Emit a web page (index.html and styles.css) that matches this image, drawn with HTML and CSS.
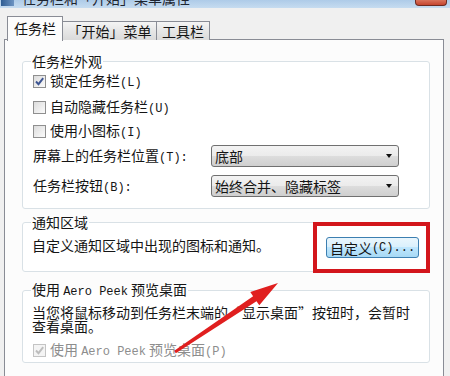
FILE: index.html
```html
<!DOCTYPE html>
<html lang="zh-CN">
<head>
<meta charset="utf-8">
<title>任务栏和「开始」菜单属性</title>
<link rel="stylesheet" href="styles.css">
</head>
<body>
<div class="titlebar">
  <div class="ticon"></div>
  <div class="ttext">任务栏和「开始」菜单属性</div>
  <div class="close"></div>
</div>
<div class="tabs">
  <div class="tab sel">任务栏</div>
  <div class="tab">「开始」菜单</div>
  <div class="tab">工具栏</div>
</div>
<div class="panel">
  <fieldset class="grp g1">
    <legend>任务栏外观</legend>
    <div class="row r1"><span class="cb on"><svg viewBox="0 0 11 11" width="11" height="11"><path d="M2 5.5 L4.5 8.2 L9.2 2.2" fill="none" stroke="#3d5592" stroke-width="1.9"/></svg></span><span class="lbl">锁定任务栏<span class="m">(L)</span></span></div>
    <div class="row r2"><span class="cb"></span><span class="lbl">自动隐藏任务栏<span class="m">(U)</span></span></div>
    <div class="row r3"><span class="cb"></span><span class="lbl">使用小图标<span class="m">(I)</span></span></div>
    <div class="row r4"><span class="flabel">屏幕上的任务栏位置<span class="m">(T):</span></span><div class="combo"><span>底部</span><i class="arr"></i></div></div>
    <div class="row r5"><span class="flabel">任务栏按钮<span class="m">(B):</span></span><div class="combo"><span>始终合并、隐藏标签</span><i class="arr"></i></div></div>
  </fieldset>
  <fieldset class="grp g2">
    <legend>通知区域</legend>
    <div class="row nrow"><span class="ntext">自定义通知区域中出现的图标和通知。</span><button class="btn">自定义<span class="m">(C)...</span></button></div>
  </fieldset>
  <fieldset class="grp g3">
    <legend>使用 <span class="m">Aero Peek</span> 预览桌面</legend>
    <div class="para">当您将鼠标移动到任务栏末端的“显示桌面”按钮时，会暂时<br>查看桌面。</div>
    <div class="row r6"><span class="cb dis"><svg viewBox="0 0 11 11" width="11" height="11"><path d="M2 5.5 L4.5 8.2 L9.2 2.2" fill="none" stroke="#bdbdbd" stroke-width="1.9"/></svg></span><span class="lbl gray">使用 <span class="m">Aero Peek</span> 预览桌面<span class="m">(P)</span></span></div>
  </fieldset>
</div>
<div class="redbox"></div>
<svg class="arrow" width="450" height="376" viewBox="0 0 450 376">
  <polygon points="175.8,353.2 256.5,301.2 259.3,305.3 278,283 250.3,292.1 253.1,296.2 174.2,350.8" fill="#e01f1f"/>
</svg>
</body>
</html>
```
FILE: styles.css
```css
html, body {
  margin: 0;
  padding: 0;
}
body {
  width: 450px;
  height: 376px;
  overflow: hidden;
  background: #f0f0f0;
  font-family: "Noto Sans CJK SC", sans-serif;
  font-size: 14px;
  color: #151515;
  position: relative;
}
.m {
  font-family: "Liberation Mono", "Noto Sans CJK SC", monospace;
  font-size: 12px;
}
.titlebar {
  height: 8px;
  display: flex;
  align-items: flex-start;
  overflow: hidden;
  background: linear-gradient(#aecbe8, #c6dcf0);
}
.ticon {
  width: 13px;
  height: 6px;
  background: linear-gradient(90deg, #2f5d93, #6d94c2);
  margin-left: 1px;
}
.ttext {
  margin-left: 8px;
  margin-top: -9px;
  line-height: 14px;
  color: #1e2530;
  white-space: nowrap;
}
.close {
  margin-left: auto;
  margin-right: 3px;
  width: 30px;
  height: 5px;
  background: linear-gradient(#d9735c, #c5452f);
  border: 1px solid #6d2b22;
  border-top: 0;
  border-radius: 0 0 4px 4px;
}
.tabs {
  height: 32px;
  display: flex;
  align-items: flex-end;
  padding-left: 7px;
}
.tab {
  height: 19px;
  box-sizing: border-box;
  border: 1px solid #898c95;
  border-bottom: 0;
  margin-left: -1px;
  background: linear-gradient(#f4f4f4, #e6e6e6 50%, #dadada);
  display: flex;
  align-items: center;
  justify-content: center;
  line-height: 14px;
  white-space: nowrap;
}
.tab:nth-child(2) { width: 95px; }
.tab:nth-child(3) { width: 54px; }
.tab.sel {
  width: 56px;
  height: 25px;
  margin-left: 0;
  margin-bottom: -1px;
  padding-bottom: 2px;
  background: #fcfcfc;
  position: relative;
  z-index: 1;
}
.panel {
  margin-top: -1px;
  margin-left: 4px;
  width: 440px;
  height: 340px;
  box-sizing: border-box;
  border: 1px solid #898c95;
  border-bottom: 0;
  background: #fcfcfc;
  padding: 14px 13px 0 17px;
}
.grp {
  margin: 0;
  padding: 0 10px;
  border: 1px solid #d9e1e6;
  border-radius: 3px;
  min-width: 0;
  background: #ffffff;
}
.grp legend {
  padding: 0 1px;
  margin-left: -2px;
  line-height: 14px;
  white-space: nowrap;
}
.row {
  display: flex;
  align-items: center;
  white-space: nowrap;
}
.r1, .r2 { height: 26px; }
.r3 { height: 22px; }
.r4 { height: 28px; }
.r5 { height: 32px; }
.g1 { padding-bottom: 6px; }
.cb {
  width: 13px;
  height: 13px;
  box-sizing: border-box;
  border: 1px solid #8f8f8f;
  background: linear-gradient(135deg, #dcdcdc, #fbfbfb);
  display: flex;
  align-items: center;
  justify-content: center;
  flex: 0 0 auto;
}
.cb.dis {
  border-color: #c4c4c4;
  background: #f4f4f4;
}
.lbl {
  margin-left: 4px;
  line-height: 14px;
}
.gray { color: #8d8d8d; }
.flabel {
  flex: 0 0 178px;
  line-height: 14px;
}
.combo {
  width: 188px;
  height: 22px;
  box-sizing: border-box;
  border: 1px solid #707070;
  border-radius: 3px;
  background: linear-gradient(#f3f3f3, #ebebeb 50%, #dddddd 50%, #cfcfcf);
  display: flex;
  align-items: center;
  padding: 0 6px 0 3px;
  line-height: 14px;
}
.combo span { flex: 1; }
.arr {
  width: 0;
  height: 0;
  border-left: 3.5px solid transparent;
  border-right: 3.5px solid transparent;
  border-top: 4px solid #111;
}
.g2 {
  margin-top: 6px;
  padding-bottom: 13px;
}
.nrow {
  margin-top: 7px;
  height: 22px;
  align-items: flex-start;
}
.ntext {
  margin-top: 2px;
  line-height: 14px;
  margin-left: -1px;
}
.btn {
  margin: 1px 0 0 auto;
  width: 93px;
  height: 21px;
  box-sizing: border-box;
  border: 1px solid #3c7fb1;
  border-radius: 3px;
  background: linear-gradient(#eaf6fd, #d9f0fc 50%, #bee6fd 50%, #a7d9f5);
  font-family: "Noto Sans CJK SC", sans-serif;
  font-size: 14px;
  color: #151515;
  padding: 0;
  display: flex;
  align-items: center;
  justify-content: center;
  line-height: 14px;
}
.g3 {
  margin-top: 10px;
  padding-bottom: 3px;
}
.para {
  margin-top: 6px;
  margin-left: -1px;
  line-height: 14px;
  white-space: nowrap;
}
.r6 {
  margin-top: 8px;
  height: 18px;
}
.redbox {
  position: absolute;
  left: 313px;
  top: 222px;
  width: 117px;
  height: 51px;
  box-sizing: border-box;
  border: 4px solid #d3161c;
}
.arrow {
  position: absolute;
  left: 0;
  top: 0;
  pointer-events: none;
}
```
